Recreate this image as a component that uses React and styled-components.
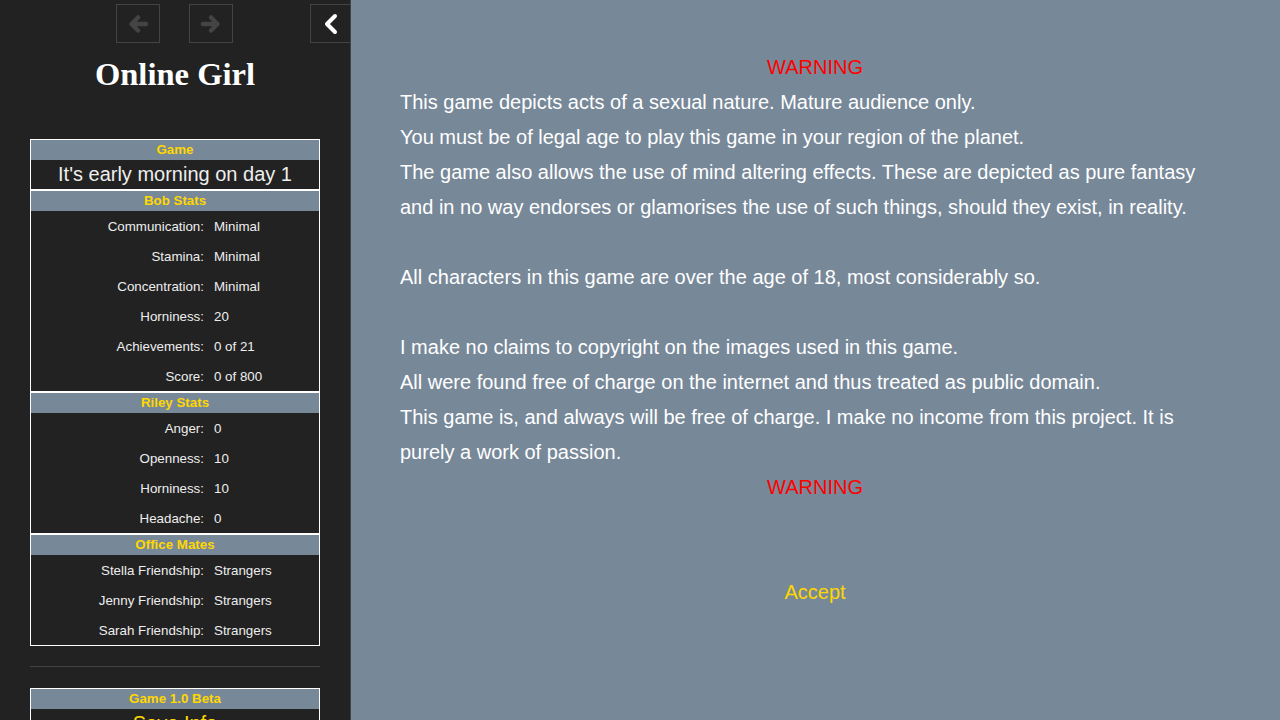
import React from "react";
import styled, { createGlobalStyle } from "styled-components";

const Global = createGlobalStyle`
  html, body { margin: 0; padding: 0; height: 100%; }
  body { font-family: "Liberation Sans", Arial, sans-serif; background: #778899; overflow: hidden; }
  #root { height: 100%; }
`;

const Page = styled.div`
  display: flex;
  height: 720px;
  width: 1280px;
`;

const Sidebar = styled.aside`
  position: relative;
  width: 350px;
  flex: 0 0 350px;
  background: #222;
  border-right: 1px solid #444;
  color: #eee;
  overflow: hidden;
`;

const History = styled.div`
  display: flex;
  justify-content: center;
  gap: 29px;
  padding: 4px 1px 0 0;
`;

const NavButton = styled.button`
  box-sizing: border-box;
  width: 44px;
  height: 39px;
  border: 1px solid #444;
  background: transparent;
  color: #444;
  padding: 0;
  display: flex;
  align-items: center;
  justify-content: center;
`;

const Toggle = styled.button`
  position: absolute;
  top: 4px;
  right: 0;
  box-sizing: border-box;
  width: 40px;
  height: 39px;
  border: 1px solid #444;
  border-right: none;
  background: #222;
  color: #fff;
  padding: 0;
  display: flex;
  align-items: center;
  justify-content: center;
`;

const Title = styled.h1`
  margin: 11px 0 0;
  font-family: "Liberation Serif", "Times New Roman", serif;
  font-weight: bold;
  font-size: 32.6px;
  line-height: 40px;
  text-align: center;
  color: #fff;
`;

const Caption = styled.div`
  margin: ${(p) => (p.$top ? "45px" : "0")} 30px 0;
  display: flex;
  flex-direction: column;
`;

const Section = styled.div`
  border: 1px solid #fff;
`;

const SectionHead = styled.div`
  height: 20px;
  line-height: 20px;
  background: #778899;
  color: #ffd700;
  font-weight: bold;
  font-size: 13.333px;
  text-align: center;
`;

const Big = styled.div`
  height: 29px;
  line-height: 29px;
  text-align: center;
  font-size: 20px;
  color: ${(p) => p.$color || "#eee"};
`;

const Row = styled.div`
  display: grid;
  grid-template-columns: 178px 1fr;
  height: 30px;
  align-items: center;
  font-size: 13.333px;
  color: #eee;
`;

const Label = styled.span`
  text-align: right;
  padding-right: 5px;
`;

const Value = styled.span`
  padding-left: 5px;
`;

const Rule = styled.hr`
  margin: 20px 30px 21px;
  border: none;
  border-top: 1px solid #444;
  height: 0;
`;

const Main = styled.main`
  flex: 1;
  background: #778899;
  padding: 50px 50px 0 49px;
  color: #fff;
  font-size: 20px;
  line-height: 35px;
`;

const Line = styled.div`
  min-height: 35px;
  text-align: ${(p) => (p.$center ? "center" : "left")};
  color: ${(p) => p.$color || "#fff"};
`;

const Accept = styled.a`
  color: #ffd700;
  text-decoration: none;
  cursor: pointer;
`;

const ArrowLeft = () => (
  <svg width="22" height="20" viewBox="0 0 22 20">
    <path d="M19 10H5 M11 3.5L4.5 10 11 16.5" fill="none" stroke="currentColor" strokeWidth="4.5" strokeLinecap="round" strokeLinejoin="round" />
  </svg>
);

const ArrowRight = () => (
  <svg width="22" height="20" viewBox="0 0 22 20">
    <path d="M3 10H17 M11 3.5L17.5 10 11 16.5" fill="none" stroke="currentColor" strokeWidth="4.5" strokeLinecap="round" strokeLinejoin="round" />
  </svg>
);

const Chevron = () => (
  <svg width="16" height="22" viewBox="0 0 16 22">
    <path d="M12 3L4 11l8 8" fill="none" stroke="currentColor" strokeWidth="4" strokeLinecap="round" strokeLinejoin="round" />
  </svg>
);

const stats = [
  { title: "Bob Stats", rows: [["Communication:", "Minimal"], ["Stamina:", "Minimal"], ["Concentration:", "Minimal"], ["Horniness:", "20"], ["Achievements:", "0 of 21"], ["Score:", "0 of 800"]] },
  { title: "Riley Stats", rows: [["Anger:", "0"], ["Openness:", "10"], ["Horniness:", "10"], ["Headache:", "0"]] },
  { title: "Office Mates", rows: [["Stella Friendship:", "Strangers"], ["Jenny Friendship:", "Strangers"], ["Sarah Friendship:", "Strangers"]] },
];

export default function App() {
  return (
    <>
      <Global />
      <Page>
        <Sidebar>
          <History>
            <NavButton aria-label="Back"><ArrowLeft /></NavButton>
            <NavButton aria-label="Forward"><ArrowRight /></NavButton>
          </History>
          <Toggle aria-label="Toggle sidebar"><Chevron /></Toggle>
          <Title>Online Girl</Title>
          <Caption $top>
            <Section>
              <SectionHead>Game</SectionHead>
              <Big>It's early morning on day 1</Big>
            </Section>
            {stats.map((s) => (
              <Section key={s.title}>
                <SectionHead>{s.title}</SectionHead>
                {s.rows.map(([l, v]) => (
                  <Row key={l}>
                    <Label>{l}</Label>
                    <Value>{v}</Value>
                  </Row>
                ))}
              </Section>
            ))}
          </Caption>
          <Rule />
          <Caption>
            <Section>
              <SectionHead>Game 1.0 Beta</SectionHead>
              <Big $color="#ffd700">Save Info</Big>
            </Section>
          </Caption>
        </Sidebar>
        <Main>
          <Line $center $color="#ff0000">WARNING</Line>
          <Line>This game depicts acts of a sexual nature. Mature audience only.</Line>
          <Line>You must be of legal age to play this game in your region of the planet.</Line>
          <Line>The game also allows the use of mind altering effects. These are depicted as pure fantasy and in no way endorses or glamorises the use of such things, should they exist, in reality.</Line>
          <Line />
          <Line>All characters in this game are over the age of 18, most considerably so.</Line>
          <Line />
          <Line>I make no claims to copyright on the images used in this game.</Line>
          <Line>All were found free of charge on the internet and thus treated as public domain.</Line>
          <Line>This game is, and always will be free of charge. I make no income from this project. It is purely a work of passion.</Line>
          <Line $center $color="#ff0000">WARNING</Line>
          <Line />
          <Line />
          <Line $center><Accept>Accept</Accept></Line>
        </Main>
      </Page>
    </>
  );
}
